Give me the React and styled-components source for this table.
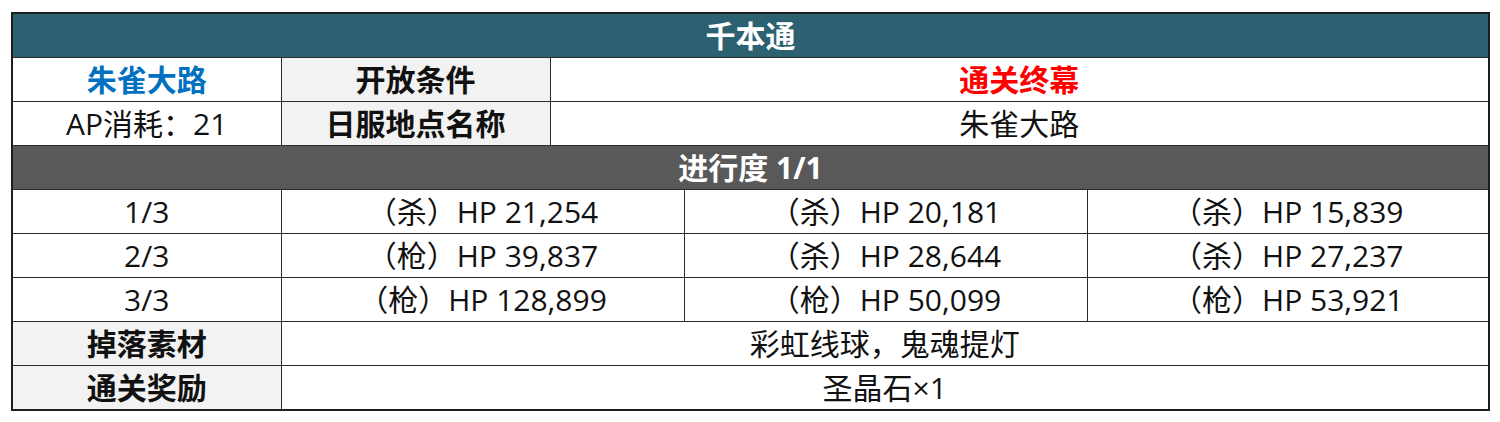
import React from "react";
import styled, { createGlobalStyle } from "styled-components";

const Global = createGlobalStyle`
  body {
    margin: 0;
    background: #ffffff;
    font-family: "Open Sans", "Noto Sans CJK SC", sans-serif;
  }
`;

const Page = styled.div`
  padding: 12px 12px 0 11px;
`;

const Table = styled.table`
  width: 1477px;
  table-layout: fixed;
  border-collapse: collapse;
  border: 2px solid #1e1e1e;
`;

const Cell = styled.td`
  height: 43px;
  padding: 0;
  border: 1px solid #2a2a2a;
  text-align: center;
  vertical-align: middle;
  font-size: 30px;
  line-height: 1;
  color: ${(p) => p.$color || "#111111"};
  font-weight: ${(p) => (p.$bold ? 700 : 400)};
  background: ${(p) => p.$bg || "#ffffff"};
  white-space: nowrap;
`;

const Header = styled(Cell)`
  color: #ffffff;
  font-weight: 700;
  background: ${(p) => p.$bg};
`;

const Label = styled(Cell)`
  font-weight: 700;
  background: #f2f2f2;
`;

const waves = [
  ["1/3", ["（杀）HP 21,254", "（杀）HP 20,181", "（杀）HP 15,839"]],
  ["2/3", ["（枪）HP 39,837", "（杀）HP 28,644", "（杀）HP 27,237"]],
  ["3/3", ["（枪）HP 128,899", "（枪）HP 50,099", "（枪）HP 53,921"]],
];

export default function App() {
  return (
    <Page>
      <Global />
      <Table>
        <colgroup>
          <col style={{ width: 269 }} />
          <col style={{ width: 269 }} />
          <col style={{ width: 134 }} />
          <col style={{ width: 403 }} />
          <col style={{ width: 402 }} />
        </colgroup>
        <tbody>
          <tr>
            <Header colSpan={5} $bg="#2b6171">千本通</Header>
          </tr>
          <tr>
            <Cell $bold $color="#0070c0">朱雀大路</Cell>
            <Label>开放条件</Label>
            <Cell colSpan={3} $bold $color="#ff0000">通关终幕</Cell>
          </tr>
          <tr>
            <Cell>AP消耗：21</Cell>
            <Label>日服地点名称</Label>
            <Cell colSpan={3}>朱雀大路</Cell>
          </tr>
          <tr>
            <Header colSpan={5} $bg="#595959">进行度 1/1</Header>
          </tr>
          {waves.map(([wave, enemies]) => (
            <tr key={wave}>
              <Cell>{wave}</Cell>
              <Cell colSpan={2}>{enemies[0]}</Cell>
              <Cell>{enemies[1]}</Cell>
              <Cell>{enemies[2]}</Cell>
            </tr>
          ))}
          <tr>
            <Label>掉落素材</Label>
            <Cell colSpan={4}>彩虹线球，鬼魂提灯</Cell>
          </tr>
          <tr>
            <Label>通关奖励</Label>
            <Cell colSpan={4}>圣晶石×1</Cell>
          </tr>
        </tbody>
      </Table>
    </Page>
  );
}
